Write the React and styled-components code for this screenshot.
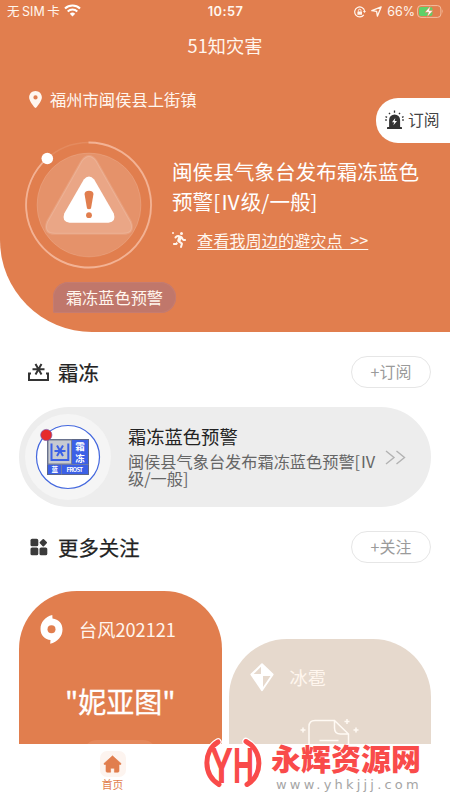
import React from "react";
import styled, { createGlobalStyle, ThemeProvider } from "styled-components";
import { FaLocationDot, FaPersonRunning } from "react-icons/fa6";

const theme = {
  font: `"Noto Sans CJK SC", sans-serif`,
  statusFont: `Inter, "Noto Sans CJK SC", sans-serif`,
  color: {
    orange: "#e17e4e",
    beige: "#e6d9cd",
    white: "#ffffff",
    cream: "#fff6ee",
    black: "#222222",
    grey: "#9b9b9b",
    red: "#f94b4a",
  },
};

export default function App() {
  return (
    <ThemeProvider theme={theme}>
      <GlobalStyle />
      <Phone>
        <Hero>
          <StatusBar>
            <Carrier>
              <span>无</span>
              <span>SIM</span>
              <span>卡</span>
              <WifiIcon />
            </Carrier>
            <Clock>10:57</Clock>
            <Battery>
              <LockIcon />
              <ArrowIcon />
              <span>66%</span>
              <BatteryIcon />
            </Battery>
          </StatusBar>
          <PageTitle>51知灾害</PageTitle>
          <Location>
            <FaLocationDot size={17} />
            福州市闽侯县上街镇
          </Location>
          <Warning>
            <WarningIcon />
            <WarningText>
              <WarningTitle>闽侯县气象台发布霜冻蓝色预警[Ⅳ级/一般]</WarningTitle>
              <ShelterLink>
                <RunnerIcon>
                  <FaPersonRunning size={16} />
                </RunnerIcon>
                <a>查看我周边的避灾点 &gt;&gt;</a>
              </ShelterLink>
            </WarningText>
          </Warning>
          <LevelTag>霜冻蓝色预警</LevelTag>
          <SubscribeTab>
            <SirenIcon />
            订阅
          </SubscribeTab>
        </Hero>

        <SectionHeader>
          <FrostIcon />
          <SectionTitle $indent={9}>霜冻</SectionTitle>
          <PillButton>+订阅</PillButton>
        </SectionHeader>

        <AlertCard>
          <FrostBadge />
          <AlertText>
            <AlertTitle>霜冻蓝色预警</AlertTitle>
            <AlertDesc>闽侯县气象台发布霜冻蓝色预警[Ⅳ级/一般]</AlertDesc>
          </AlertText>
          <MoreIcon />
        </AlertCard>

        <SectionHeader>
          <GridIcon />
          <SectionTitle $indent={10}>更多关注</SectionTitle>
          <PillButton>+关注</PillButton>
        </SectionHeader>

        <CardRow>
          <TopicCard $color={theme.color.orange}>
            <TopicHeader>
              <TyphoonIcon />
              台风202121
            </TopicHeader>
            <TopicName>"妮亚图"</TopicName>
            <TopicPill />
          </TopicCard>
          <TopicCard $color={theme.color.beige} $offset={48}>
            <TopicHeader>
              <HailIcon />
              冰雹
            </TopicHeader>
            <EmptyIcon />
          </TopicCard>
        </CardRow>

        <TabBar>
          <Tab>
            <TabIcon>
              <HomeIcon />
            </TabIcon>
            首页
          </Tab>
          <Watermark>
            <SiteLogo />
            <SiteText>
              <SiteName>永辉资源网</SiteName>
              <SiteUrl>www.yhkjjj.com</SiteUrl>
            </SiteText>
          </Watermark>
        </TabBar>
      </Phone>
    </ThemeProvider>
  );
}

const WifiIcon = () => (
  <svg width="17" height="13" viewBox="0 0 17 13" fill="none">
    <path d="M1 4.6a10.8 10.8 0 0 1 15 0" stroke="#fff" strokeWidth="2.1" />
    <path d="M3.7 7.5a7 7 0 0 1 9.6 0" stroke="#fff" strokeWidth="2" />
    <path d="M8.5 12.5 5.8 9.7a4 4 0 0 1 5.4 0z" fill="#fff" />
  </svg>
);

const LockIcon = () => (
  <svg width="12" height="12" viewBox="0 0 12 12" fill="none">
    <path d="M10.6 5A5 5 0 1 0 9.8 8.8" stroke="#fff6ee" strokeWidth="1.2" />
    <path d="M8.9 5h3.1l-1.5 2.1z" fill="#fff6ee" />
    <rect x="3.4" y="5.4" width="4.6" height="3.4" rx="0.5" fill="#fff6ee" />
    <path d="M4.4 5.6V4.5a1.3 1.3 0 0 1 2.6 0v1.1" stroke="#fff6ee" />
  </svg>
);

const ArrowIcon = () => (
  <svg width="11" height="11" viewBox="0 0 11 11" fill="none">
    <path
      d="M10.2 0.8 6.4 10.2 5.6 5.4 0.8 4.6z"
      stroke="#fff6ee"
      strokeWidth="1.3"
      strokeLinejoin="round"
    />
  </svg>
);

const BatteryIcon = () => (
  <svg width="27" height="13" viewBox="0 0 27 13" fill="none">
    <rect x="0.6" y="0.6" width="23.3" height="11.8" rx="3.4" stroke="#f3bfa2" />
    <rect x="2" y="2" width="13.5" height="9" rx="2" fill="#5fd068" />
    <path d="M25.2 4.3q1.6 2.2 0 4.4z" fill="#f3bfa2" />
    <path
      d="M13.6.8 7.9 7.2h3.6L10 12.2l6-6.6h-3.7z"
      fill="#fff"
      stroke="#e17e4e"
      strokeWidth="0.6"
    />
  </svg>
);

const SirenIcon = () => (
  <svg width="19" height="20" viewBox="0 0 19 20" fill="#333">
    <path d="M4.1 17V9.9a5.5 5.5 0 0 1 11 0V17z" />
    <rect x="2" y="17" width="15" height="2" rx="0.6" />
    <path
      d="M9.5 0.5v2.2M4 2.8l1 1.4M15 2.8l-1 1.4M.5 6.7l1.6.6M18.6 6.7l-1.6.6M0.2 10h1.6M17.2 10h1.6"
      stroke="#333"
      strokeWidth="1.3"
    />
    <path d="M10.3 8 7 12.2h2.2l-.8 3.1 3.6-4.4H9.7z" fill="#fff" />
  </svg>
);

const WarningIcon = () => (
  <svg width="130" height="130" viewBox="0 0 130 130" fill="none">
    <circle cx="65" cy="65" r="52" fill="#fff" fillOpacity="0.16" stroke="#fff" strokeOpacity="0.12" />
    <circle cx="65" cy="65" r="62.5" stroke="#f1b394" strokeOpacity="0.25" strokeWidth="1.4" />
    <path
      d="M64.5 2.5a62.5 62.5 0 1 1-41.5 15.8"
      stroke="#f3b294"
      strokeWidth="1.8"
    />
    <path
      d="M57.5 21Q65 11 72.5 21L107 82Q111 93.8 99 93.8H31Q19 93.8 23 82z"
      fill="#fff"
      fillOpacity="0.19"
      stroke="#fff"
      strokeOpacity="0.13"
      strokeWidth="2"
    />
    <path
      d="M59.8 39.5Q65 33.5 70.2 39.5L89.8 73.5Q92.5 82 84.5 82.7H45.5Q37.5 82 40.2 73.5z"
      fill="#fff"
    />
    <path d="M60.5 54Q61 50.7 65 50.7T69.5 54L67 68.5Q65 70 63 68.5z" fill="#e17e4e" />
    <circle cx="65" cy="75.2" r="2.9" fill="#e17e4e" />
    <circle cx="23.3" cy="18.5" r="5.8" fill="#fff" />
  </svg>
);

const FrostIcon = () => (
  <svg width="21" height="20" viewBox="0 0 21 20" fill="none" stroke="#333" strokeWidth="2">
    <path d="M1 10.5v7.5h19v-7.5M1 11.5h2M20 11.5h-2" />
    <path d="M4.5 7.3h12M7.5 2l6 10.6M13.5 2l-6 10.6" />
  </svg>
);

const FrostBadge = () => (
  <svg width="86" height="86" viewBox="0 0 86 86" fill="none">
    <circle cx="43" cy="43" r="43" fill="#f5f5f5" />
    <circle cx="43" cy="43" r="31.5" fill="#fff" stroke="#4468de" strokeWidth="1.2" />
    <rect x="22.5" y="25.5" width="41" height="35" fill="#3c60e6" stroke="#5d6788" />
    <rect x="23" y="26" width="23.5" height="24" fill="#c7cad1" stroke="#777e91" />
    <path d="M22.5 50.5h41M36.5 50.5v10" stroke="#6c7aac" />
    <path d="M26.5 29.5V46h16.8V29.5" stroke="#3c60e6" strokeWidth="2" />
    <path
      d="M29.5 37h11M32 31.5l6 10.5M38 31.5l-6 10.5"
      stroke="#3c60e6"
      strokeWidth="2"
    />
    <FrostLabel x="50.3" y="36.3" $size={9.5}>霜</FrostLabel>
    <FrostLabel x="50.3" y="47.5" $size={9.5}>冻</FrostLabel>
    <FrostLabel x="26.5" y="58" $size={6.5}>蓝</FrostLabel>
    <FrostLabel x="41.5" y="57.8" $size={6} textLength="16.5">FROST</FrostLabel>
    <circle cx="21.3" cy="21" r="5.6" fill="#e62a2a" stroke="#7a55a8" strokeWidth="0.7" />
  </svg>
);

const MoreIcon = () => (
  <svg width="21" height="15" viewBox="0 0 21 15" fill="none" stroke="#b2b2b2" strokeWidth="1.4">
    <path d="M1 1l8 6.5L1 14M11.5 1l8 6.5-8 6.5" />
  </svg>
);

const GridIcon = () => (
  <svg width="20" height="18" viewBox="0 0 20 18" fill="#3b3b3b">
    <rect x="2.5" y="0.8" width="7.8" height="7.5" rx="1.6" />
    <rect x="2.5" y="9.5" width="7.8" height="7.8" rx="1.6" />
    <rect x="11.5" y="9.5" width="7.8" height="7.8" rx="1.6" />
    <rect x="12.4" y="1.8" width="5.8" height="5.8" rx="0.9" transform="rotate(45 15.3 4.7)" />
  </svg>
);

const TyphoonIcon = () => (
  <svg width="23" height="29" viewBox="0 0 23 29">
    <path
      fill="#fff"
      d="M12.3 0C5 1.8.5 7.3.5 14c0 6.5 4.6 10.6 10 11l-.3 3.7C17.5 27 22.5 21.5 22.5 14.5c0-6-3.8-10.2-10-11z"
    />
    <circle cx="11.5" cy="14.3" r="4" fill="#e17e4e" />
  </svg>
);

const HailIcon = () => (
  <svg width="24" height="29" viewBox="0 0 24 29">
    <path
      d="M12 1.2 22.7 11.5 12 27.3 1.3 11.5z"
      fill="#fff"
      stroke="#fff"
      strokeWidth="1.8"
      strokeLinejoin="round"
    />
    <path d="M11 3.8V11H3.7zM13 13h7.5L13 24z" fill="#e6d9cd" />
  </svg>
);

const EmptyIcon = () => (
  <EmptySvg width="62" height="44" viewBox="0 0 62 44" fill="none" stroke="#fffaf4" strokeWidth="1.5">
    <path d="M10 44V7.5q0-6 6-6h19.5l14 13.5v29M35.5 1.5V9q0 6 6 6h8M20.5 21.5H39.5" />
    <path d="M4 8.5v5M1.5 11h5M48 0v5M45.5 2.5h5M57 8.5v5M54.5 11h5" />
  </EmptySvg>
);

const HomeIcon = () => (
  <svg width="19" height="18" viewBox="0 0 19 18" fill="#e17e4e">
    <path
      d="M9.5.8 18 8.5q.4 1-.8 1H16V16q0 1.200-1.200 1.200H11.400V14q0-.8-.8-.8H8.400q-.8 0-.8.800v3.200H4.200Q3 17.200 3 16V9.500H1.800q-1.200 0-.8-1z"
      stroke="#e17e4e"
      strokeWidth="0.6"
    />
  </svg>
);

const SiteLogo = () => (
  <LogoSvg width="56" height="50" viewBox="0 0 56 50" fill="none">
    <path
      d="M14 4C-1 13-1 37 15 46.5M42 3.5c17 9 17 34 1 43"
      stroke="#fff"
      strokeWidth="7.5"
      strokeLinecap="round"
    />
    <path
      d="M14 4C-1 13-1 37 15 46.5M42 3.5c17 9 17 34 1 43"
      stroke="#f94b4a"
      strokeWidth="5"
      strokeLinecap="round"
    />
    <LogoText x="6" y="44.5" textLength="23" lengthAdjust="spacingAndGlyphs">
      Y
    </LogoText>
    <LogoText x="29" y="44.5" textLength="21" lengthAdjust="spacingAndGlyphs">
      H
    </LogoText>
  </LogoSvg>
);

const GlobalStyle = createGlobalStyle`
  * {
    box-sizing: border-box;
  }

  body {
    margin: 0;
    background-color: #ffffff;
  }

  h1, h2, h3, p {
    margin: 0;
    font-weight: 400;
  }

  svg {
    flex-shrink: 0;
    display: block;
  }
`;

const Phone = styled.div`
  display: flex;
  flex-direction: column;
  width: 450px;
  height: 799px;
  overflow: hidden;
  background-color: ${({ theme }) => theme.color.white};
  font-family: ${({ theme }) => theme.font};
`;

const Hero = styled.header`
  position: relative;
  flex-shrink: 0;
  height: 332px;
  border-bottom-left-radius: 92px;
  background-color: ${({ theme }) => theme.color.orange};
  color: ${({ theme }) => theme.color.cream};
`;

const StatusBar = styled.div`
  display: grid;
  grid-template-columns: 1fr auto 1fr;
  align-items: center;
  height: 23px;
  padding: 0 6px 0 7px;
  font-family: ${({ theme }) => theme.statusFont};
  font-size: 12.5px;
  line-height: 23px;
`;

const Carrier = styled.div`
  display: flex;
  align-items: center;
  gap: 2.5px;

  svg {
    margin: -2px 0 0 2px;
  }
`;

const Clock = styled.div`
  font-size: 12.8px;
  font-weight: 600;
  letter-spacing: 0.4px;
`;

const Battery = styled.div`
  display: flex;
  align-items: center;
  justify-content: flex-end;
  gap: 5px;

  span {
    margin: 0 -3px 0 0;
  }
`;

const PageTitle = styled.h1`
  margin-top: 9px;
  font-size: 18.2px;
  line-height: 26px;
  text-align: center;
`;

const Location = styled.div`
  display: flex;
  align-items: center;
  gap: 6px;
  margin: 28px 0 0 27px;
  font-size: 16.3px;
  line-height: 26px;
`;

const Warning = styled.div`
  display: flex;
  gap: 18px;
  margin: 28px 0 0 24px;
`;

const WarningText = styled.div`
  width: 252px;
  padding-top: 16px;
`;

const WarningTitle = styled.h2`
  color: ${({ theme }) => theme.color.white};
  font-size: 20.6px;
  line-height: 30px;
`;

const ShelterLink = styled.div`
  display: flex;
  align-items: center;
  gap: 9px;
  margin-top: 14px;
  font-size: 16.2px;
  line-height: 20px;

  a {
    white-space: nowrap;
    text-decoration: underline;
    text-decoration-thickness: 1px;
    text-underline-offset: 2px;
    word-spacing: 4px;
  }
`;

const RunnerIcon = styled.span`
  display: flex;

  &::before {
    content: "";
    width: 2px;
    height: 2px;
    margin-right: -2px;
    border-radius: 1px;
    background-color: currentColor;
  }
`;

const LevelTag = styled.div`
  display: flex;
  align-items: center;
  justify-content: center;
  width: 123px;
  height: 31px;
  margin: 12px 0 0 53px;
  border-radius: 15.5px 15.5px 15.5px 2px;
  background-color: #c0776b;
  box-shadow: inset 0 0 0 1px #c57c71;
  font-size: 16.2px;
  line-height: 1;
`;

const SubscribeTab = styled.div`
  position: absolute;
  top: 98px;
  right: 0;
  display: flex;
  align-items: center;
  gap: 4px;
  width: 74px;
  height: 44.5px;
  padding: 0 0 1px 9px;
  border-radius: 22px 0 0 22px;
  background-color: ${({ theme }) => theme.color.white};
  color: #444444;
  font-size: 15.8px;
  white-space: nowrap;
`;

const SectionHeader = styled.div`
  display: flex;
  align-items: center;
  flex-shrink: 0;
  height: 32px;
  margin: 24px 19px 0 28px;
`;

const SectionTitle = styled.h2`
  flex: 1;
  padding-left: ${({ $indent }) => $indent}px;
  color: ${({ theme }) => theme.color.black};
  font-size: 20.4px;
  line-height: 31px;
  -webkit-text-stroke: 0.25px currentColor;
`;

const PillButton = styled.button`
  width: 80px;
  height: 32px;
  padding: 0 0 2px;
  border: 1px solid #e6e6e6;
  border-radius: 16px;
  background-color: ${({ theme }) => theme.color.white};
  color: ${({ theme }) => theme.color.grey};
  font-family: inherit;
  font-size: 16px;
  line-height: 1;
`;

const AlertCard = styled.div`
  display: flex;
  align-items: center;
  flex-shrink: 0;
  height: 100px;
  margin: 19px 19px 0;
  padding: 0 25px 0 6px;
  border-radius: 50px;
  background-color: #ededed;
`;

const AlertText = styled.div`
  width: 257px;
  margin: -4px 0 0 17px;
`;

const AlertTitle = styled.h3`
  color: ${({ theme }) => theme.color.black};
  font-size: 18.3px;
  line-height: 26px;
`;

const AlertDesc = styled.p`
  width: 254px;
  margin-top: 4px;
  color: #666666;
  font-size: 16.2px;
  line-height: 17px;
`;

const FrostLabel = styled.text`
  fill: ${({ theme }) => theme.color.white};
  font-size: ${({ $size }) => $size}px;
  font-weight: 700;
`;

const CardRow = styled.div`
  display: flex;
  gap: 7px;
  flex: 1;
  min-height: 0;
  padding: 28px 19px 0;
`;

const TopicCard = styled.div`
  display: flex;
  flex-direction: column;
  align-items: center;
  flex: 1;
  overflow: hidden;
  margin-top: ${({ $offset }) => $offset || 0}px;
  border-radius: 58px 58px 0 0;
  background-color: ${({ $color }) => $color};
  color: ${({ theme }) => theme.color.cream};
`;

const TopicHeader = styled.div`
  display: flex;
  align-items: center;
  align-self: flex-start;
  gap: 16px;
  margin: 24px 0 0 21px;
  font-size: 18.2px;
  line-height: 29px;
`;

const TopicName = styled.p`
  margin-top: 37px;
  color: ${({ theme }) => theme.color.white};
  font-size: 28px;
  line-height: 40px;
  -webkit-text-stroke: 0.3px currentColor;
`;

const TopicPill = styled.div`
  flex-shrink: 0;
  width: 74px;
  height: 28px;
  margin-top: 19px;
  border-radius: 14px;
  background-color: #e5895c;
`;

const EmptySvg = styled.svg`
  margin-top: 27px;
`;

const TabBar = styled.nav`
  position: relative;
  flex-shrink: 0;
  height: 55px;
  background-color: ${({ theme }) => theme.color.white};
`;

const Tab = styled.div`
  display: flex;
  flex-direction: column;
  align-items: center;
  width: 225px;
  padding-top: 7px;
  color: ${({ theme }) => theme.color.orange};
  font-size: 10.8px;
  line-height: 15px;
`;

const TabIcon = styled.div`
  display: flex;
  align-items: center;
  justify-content: center;
  width: 26px;
  height: 26px;
  border-radius: 7px;
  background-color: #fdf4ef;
`;

const Watermark = styled.div`
  position: absolute;
  top: -6px;
  left: 204px;
  display: flex;
  gap: 11px;
`;

const LogoSvg = styled.svg`
  overflow: visible;
`;

const LogoText = styled.text`
  fill: ${({ theme }) => theme.color.red};
  font-family: "Liberation Sans", sans-serif;
  font-size: 50px;
  font-weight: 700;
`;

const SiteText = styled.div`
  padding-top: 3px;
`;

const SiteName = styled.p`
  color: ${({ theme }) => theme.color.red};
  font-size: 30px;
  font-weight: 900;
  line-height: 32px;
  white-space: nowrap;
`;

const SiteUrl = styled.p`
  margin: 4px 0 0 5px;
  color: #a5a5a5;
  font-family: "DejaVu Sans", sans-serif;
  font-size: 13px;
  letter-spacing: 3.2px;
  line-height: 15px;
  white-space: nowrap;
`;
